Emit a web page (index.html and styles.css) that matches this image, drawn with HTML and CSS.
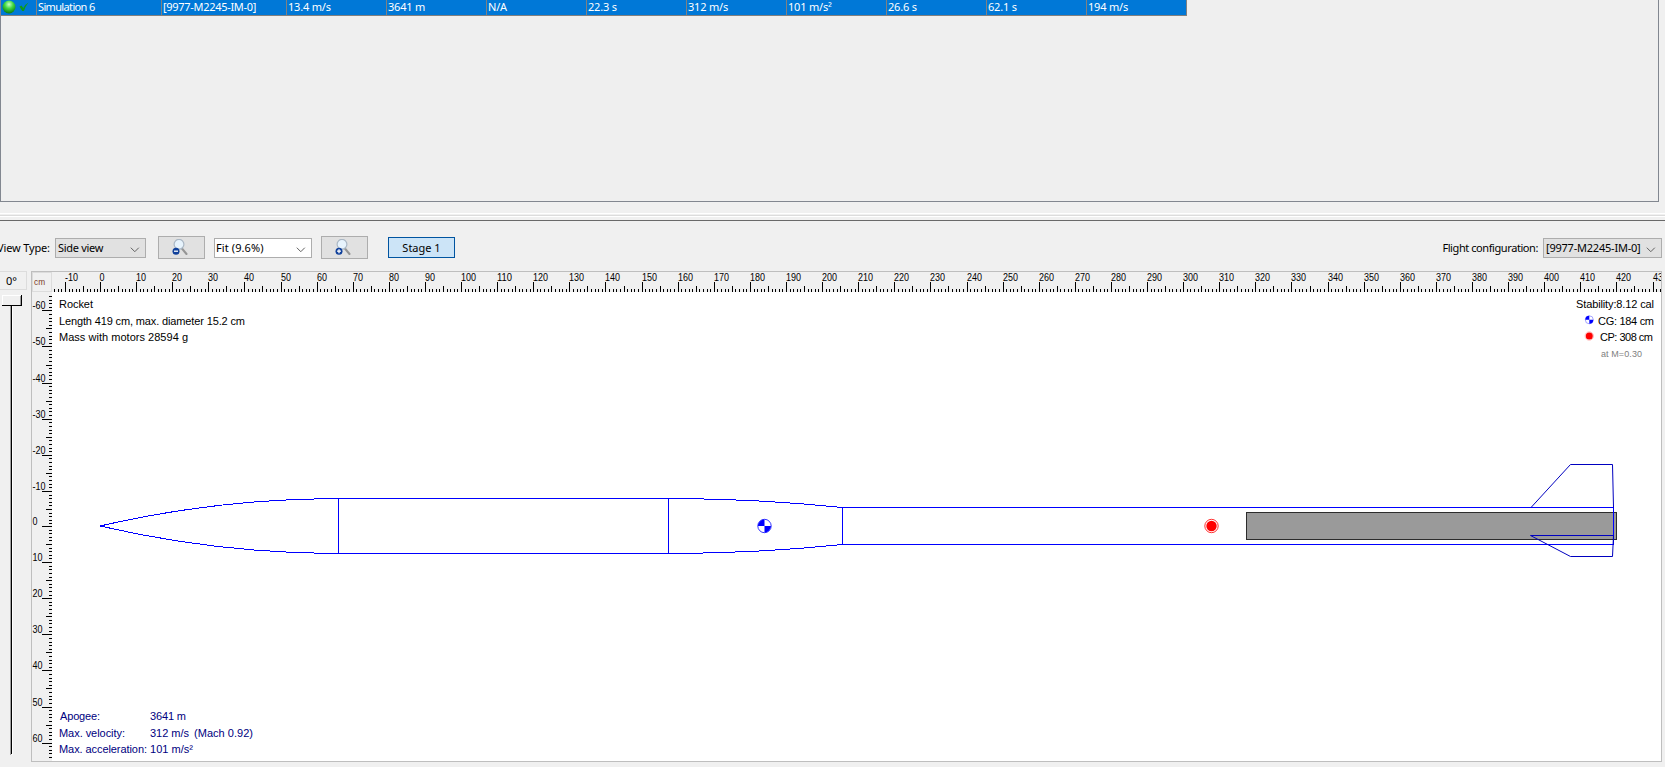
FILE: index.html
```html
<!DOCTYPE html>
<html lang="en">
<head>
<meta charset="utf-8">
<title>Rocket design</title>
<link rel="stylesheet" href="styles.css">
</head>
<body>
<section class="simulations">
  <div class="row">
    <div class="cell status">
      <svg width="34" height="15" viewBox="0 0 34 15">
        <defs><radialGradient id="ball" cx=".5" cy=".3" r=".7"><stop offset="0" stop-color="#c9ffc9"/><stop offset=".45" stop-color="#43d943"/><stop offset="1" stop-color="#087a10"/></radialGradient></defs>
        <circle cx="8" cy="7" r="6.500" fill="url(#ball)"/>
        <path d="M18.500 6.500l2-1 1.800 2.500q1.500-3.500 5.200-5.500q-3.300 4-4.500 8.500h-1.800z" fill="#0f9a1a"/>
      </svg>
    </div>
    <div class="cell name"><span>Simulation 6</span></div>
    <div class="cell config"><span>[9977-M2245-IM-0]</span></div>
    <div class="cell"><span>13.4 m/s</span></div>
    <div class="cell"><span>3641 m</span></div>
    <div class="cell"><span>N/A</span></div>
    <div class="cell"><span>22.3 s</span></div>
    <div class="cell"><span>312 m/s</span></div>
    <div class="cell"><span>101 m/s²</span></div>
    <div class="cell"><span>26.6 s</span></div>
    <div class="cell"><span>62.1 s</span></div>
    <div class="cell"><span>194 m/s</span></div>
  </div>
</section>
<div class="splitter"></div>
<header class="toolbar">
  <span class="label view-label">View Type:</span>
  <div class="combo view"><span class="view-text">Side view</span><svg class="chev" width="10" height="6"><path d="M.8.7l4 4 4-4"/></svg></div>
  <div class="button zoom-out">
    <svg width="16" height="16" viewBox="0 0 16 16"><path class="handle" d="M9.500 9l5 6"/><circle class="lens" cx="7" cy="5.300" r="4.900"/><circle class="badge" cx="4" cy="12.200" r="3.500"/><path class="sign" d="M2 12.200h4"/></svg>
  </div>
  <div class="combo fit"><span class="fit-text">Fit (9.6%)</span><svg class="chev" width="10" height="6"><path d="M.8.7l4 4 4-4"/></svg></div>
  <div class="button zoom-in">
    <svg width="16" height="16" viewBox="0 0 16 16"><path class="handle" d="M9.500 9l5 6"/><circle class="lens" cx="7" cy="5.300" r="4.900"/><circle class="badge" cx="4" cy="12.200" r="3.500"/><path class="sign" d="M2 12.200h4M4 10.200v4"/></svg>
  </div>
  <div class="stage"><span>Stage 1</span></div>
  <span class="label flight-label">Flight configuration:</span>
  <div class="combo flight"><span class="flight-text">[9977-M2245-IM-0]</span><svg class="chev" width="10" height="6"><path d="M.8.7l4 4 4-4"/></svg></div>
</header>
<main class="workspace">
  <aside class="rotation">
    <div class="angle">0°</div>
    <svg width="27" height="464" viewBox="0 0 27 464" shape-rendering="crispEdges">
      <path d="M10.500 4v460" stroke="#a0a0a0"/><path d="M11.500 4v459" stroke="#000"/><path d="M12.500 4v460H10" stroke="#fff" fill="none"/>
      <rect x="2" y="4" width="20" height="11" fill="#f0f0f0"/>
      <path d="M2.500 14V4.500H21" stroke="#fff" fill="none"/><path d="M20.500 5v9H3" stroke="#a0a0a0" fill="none"/><path d="M21.500 4v11M2 14.500h20" stroke="#000"/>
    </svg>
  </aside>
  <section class="figure">
    <svg id="drawing" width="1629" height="489" viewBox="32 272 1629 489">
      <rect x="52" y="292" width="1609" height="469" fill="#fff"/>
      <rect x="32.500" y="272.500" width="19" height="19" fill="#f0f0f0" stroke="#dcdcdc"/>
      <text class="unit" x="34" y="285" textLength="11" lengthAdjust="spacingAndGlyphs">cm</text>
      <g id="rulers"></g>
      <g class="info">
        <text x="59" y="308" textLength="34">Rocket</text>
        <text x="59" y="325" textLength="186">Length 419 cm, max. diameter 15.2 cm</text>
        <text x="59" y="341" textLength="129">Mass with motors 28594 g</text>
        <text x="1576" y="308" textLength="78">Stability:8.12 cal</text>
        <text x="1598" y="325" textLength="56">CG: 184 cm</text>
        <text x="1600" y="341" textLength="53">CP: 308 cm</text>
        <text class="mach" x="1601" y="357" textLength="41">at M=0.30</text>
      </g>
      <g class="info flightdata">
        <text x="60" y="720" textLength="40">Apogee:</text><text x="150" y="720" textLength="36">3641 m</text>
        <text x="59" y="737" textLength="66">Max. velocity:</text><text x="150" y="737" textLength="39">312 m/s</text><text x="194" y="737" textLength="59">(Mach 0.92)</text>
        <text x="59" y="753" textLength="88">Max. acceleration:</text><text x="150" y="753" textLength="43">101 m/s²</text>
      </g>
      <rect class="motor" x="1246.500" y="512.500" width="370" height="27"/>
      <g class="rocket">
        <path d="M100 526Q219 498.500 338.500 498.500H668.500Q755 498.500 842.500 507.500H1613.500V544.500H842.500Q755 553.500 668.500 553.500H338.500Q219 553.500 100 526z"/>
        <path d="M338.500 498v56M668.500 498v56M842.500 507v38"/>
      </g>
      <g class="fins">
        <path d="M1531 507.500L1570.500 464.500H1612.500L1613.500 507.500"/>
        <path d="M1613.500 535.500H1530.500L1570.500 556.500H1612.500L1613.500 535.500"/>
      </g>
      <g id="cg"><circle cx="764.500" cy="526" r="6.700" fill="#fff" stroke="#00f" stroke-width=".8"/><path d="M764.500 526v-6.500a6.500 6.500 0 0 0-6.500 6.500zM764.500 526h6.500a6.500 6.500 0 0 1-6.500 6.500z" fill="#00f"/></g>
      <g><circle cx="1211.500" cy="526" r="6.700" fill="#fff" stroke="red" stroke-width=".8"/><circle cx="1211.500" cy="526" r="5.200" fill="red"/></g>
      <circle cx="1589.300" cy="319.800" r="4" fill="#fff" stroke="#8080ff" stroke-width=".7"/><path d="M1589.300 319.800v-4a4 4 0 0 0-4 4zM1589.300 319.800h4a4 4 0 0 1-4 4z" fill="#00f"/>
      <circle cx="1589.300" cy="336" r="4.200" fill="#fff" stroke="#ff9c9c" stroke-width=".7"/><circle cx="1589.300" cy="336" r="3.500" fill="red"/>
    </svg>
  </section>
</main>
<script src="rulers.js"></script>
</body>
</html>
```
FILE: styles.css
```css
* { box-sizing: border-box; }
body {
  margin: 0;
  width: 1665px;
  height: 767px;
  overflow: hidden;
  background: #f0f0f0;
  color: #000;
  font: 11px/14px "Noto Sans", sans-serif;
}
.simulations {
  width: 1659px;
  height: 202px;
  border: 1px solid #828790;
  border-top: 0;
  background: #efefef;
}
.row { display: flex; width: 1186px; height: 16px; background: #0078d7; border-bottom: 1px solid #808080; color: #fff; }
.cell { width: 100px; flex: none; border-right: 1px solid #808080; padding-left: 1px; white-space: nowrap; letter-spacing: -.2px; }
.status { width: 36px; padding: 0; }
.name { width: 125px; letter-spacing: -.65px; }
.config { width: 125px; letter-spacing: -.3px; }
.splitter { height: 19px; border-bottom: 1px solid #696969; background: linear-gradient(#f0f0f0 11px, #fff 11px 12px, #f0f0f0 12px 13px, #dcdcdc 13px 14px, #fff 14px 15px, #f0f0f0 15px); }
.toolbar { display: flex; height: 50px; padding-top: 15px; align-items: flex-start; font-size: 11px; line-height: 18px; white-space: nowrap; }
.label { padding-top: 3px; }
.view-label { width: 58px; margin-left: -3px; letter-spacing: -.15px; }
.combo { display: flex; align-items: center; justify-content: space-between; height: 20px; margin-top: 2px; padding: 0 5px 0 2px; border: 1px solid #adadad; background: #e1e1e1; letter-spacing: -.3px; }
.view { width: 91px; }
.fit { width: 98px; margin-left: 9px; background: #fff; padding-left: 1px; letter-spacing: .1px; }
.flight { width: 119px; margin-left: 5px; letter-spacing: -.22px; }
.chev { fill: none; stroke: #606060; margin-top: 4px; }
.button { display: flex; align-items: center; justify-content: center; width: 47px; height: 23px; border: 1px solid #adadad; background: #e1e1e1; }
.button svg { margin-left: -3px; margin-top: -1px; }
.zoom-out { margin-left: 12px; }
.zoom-in { margin-left: 9px; }
.handle { stroke: #959595; stroke-width: 2; stroke-linecap: round; }
.lens { fill: #e7f3fc; stroke: #aab7c4; stroke-width: 1.2; }
.badge { fill: #11419b; }
.sign { stroke: #fff; stroke-width: 1.3; }
.stage { width: 67px; height: 21px; margin: 1px 0 0 20px; padding-top: 1px; border: 1px solid #0054a0; background: #cce4f7; text-align: center; }
.flight-label { margin-left: auto; letter-spacing: -.42px; }
.toolbar .flight { margin-right: 3px; }
.workspace { display: flex; }
.rotation { width: 31px; padding: 0; }
.angle { width: 27px; height: 19px; border: 1px solid #dcdcdc; border-left: 0; padding: 1px 0 0 6px; font-size: 11px; line-height: 16px; }
.rotation svg { display: block; margin-top: 1px; }
.figure { width: 1631px; height: 491px; border: 1px solid #bebebe; }
#drawing { display: block; }
.tick { stroke: #000; shape-rendering: crispEdges; }
.num { font: 10px "Liberation Sans", sans-serif; }
.unit { font: 9px "Liberation Sans", sans-serif; fill: #7b3b26; }
.info { font: 11px "Liberation Sans", sans-serif; }
.mach { font-size: 9px; fill: #808080; }
.flightdata { fill: #000080; }
.motor { fill: #9a9a9a; stroke: #2c2c2c; }
.rocket { fill: none; stroke: #00f; shape-rendering: crispEdges; }
.fins { fill: none; stroke: #0000c0; }
```
FILE: rulers.js
```js
// Ruler divisions: one tick per centimetre, labelled every ten.
const SCALE = 3.6105;
const rulers = document.getElementById('rulers');
const pos = (origin, n) => Math.round(origin + SCALE * n) + (n < 0 ? 1 : 0);
const label = (x, y, n) => {
  const digits = String(Math.abs(n)).length;
  return `<text class="num" x="${x}" y="${y}" textLength="${digits * 5 + (n < 0 ? 3 : 0)}" lengthAdjust="spacingAndGlyphs">${n}</text>`;
};
let path = '', labels = '';
for (let n = -13; n <= 432; n++) {
  const x = pos(100, n);
  if (x < 54 || x > 1660) continue;
  const size = n % 10 === 0 ? 10 : n % 5 === 0 ? 6 : 3;
  path += `M${x + .5} ${292 - size}V292`;
  if (n % 10 === 0) labels += label(x - (n === 0 ? .5 : 0), 281, n);
}
for (let n = -64; n <= 64; n++) {
  const y = pos(526, n);
  if (y < 296 || y > 758) continue;
  const size = n % 10 === 0 ? 10 : n % 5 === 0 ? 6 : 3;
  path += `M${52 - size} ${y + .5}H52`;
  if (n % 10 === 0) labels += label(32.5, y - 1, n);
}
rulers.innerHTML = `<path class="tick" d="${path}"/>${labels}`;
```
